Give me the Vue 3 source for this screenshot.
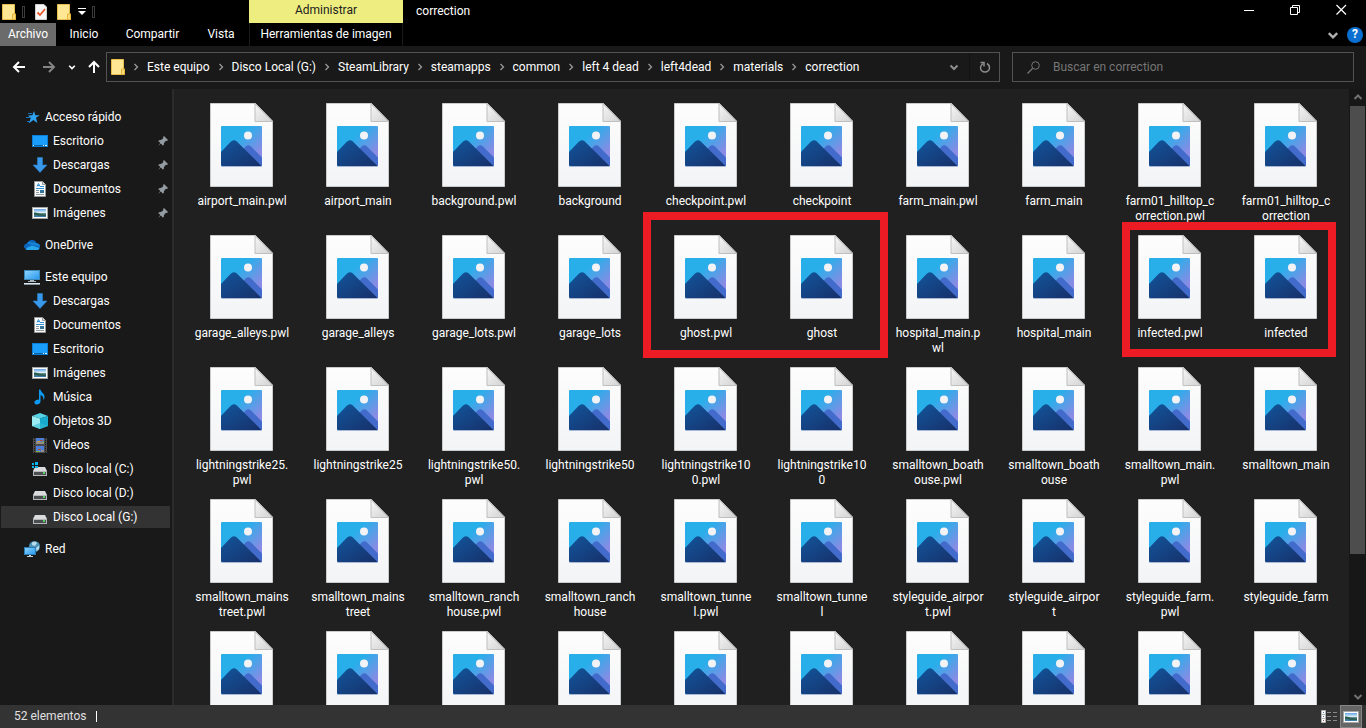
<template>
  <div class="explorer">
    <svg class="defs" aria-hidden="true">
      <defs>
        <linearGradient id="sky" x1="0" y1="0" x2="1" y2="1">
          <stop offset="0.35" stop-color="#28afea" />
          <stop offset="0.8" stop-color="#8a8be4" />
        </linearGradient>
        <linearGradient id="hill" x1="0" y1="0" x2="1" y2="1">
          <stop offset="0" stop-color="#12559b" />
          <stop offset="1" stop-color="#17306a" />
        </linearGradient>
        <linearGradient id="paper" x1="0" y1="0" x2="0" y2="1">
          <stop offset="0" stop-color="#fdfdfd" />
          <stop offset="1" stop-color="#f3f4f6" />
        </linearGradient>
        <linearGradient id="fold" x1="0" y1="0" x2="1" y2="1">
          <stop offset="0" stop-color="#f6f6f6" />
          <stop offset="1" stop-color="#d2d2d2" />
        </linearGradient>
        <linearGradient id="screen" x1="0" y1="0" x2="1" y2="1">
          <stop offset="0" stop-color="#8fd6ff" />
          <stop offset="1" stop-color="#2496ee" />
        </linearGradient>
        <linearGradient id="photo" x1="0" y1="0" x2="0" y2="1">
          <stop offset="0" stop-color="#5fa5ea" />
          <stop offset="0.45" stop-color="#dcecf5" />
          <stop offset="0.6" stop-color="#3d6f68" />
          <stop offset="1" stop-color="#3f80b5" />
        </linearGradient>
      </defs>

      <symbol id="i-image-file" viewBox="0 0 64 84">
        <path d="M.5 .5H45.5L62.5 18V83.5H.5z" fill="url(#paper)" stroke="#c9cbcc" />
        <path d="M45 .8V18.500H62.500z" fill="url(#fold)" stroke="#bfbfbf" />
        <rect x="11" y="24" width="41" height="40" rx="1" fill="#a9b7d6" />
        <rect x="11" y="23" width="41" height="40" rx="1" fill="url(#sky)" />
        <path d="M33 46.500L36 43.200Q38.500 41.200 41 43.500L52 54.500V62L51 63H40z" fill="#426bcb" />
        <path d="M11 49L20.500 39Q23.500 36 26.800 38.500L51.500 63H12L11 62z" fill="url(#hill)" />
        <circle cx="38" cy="32.500" r="4" fill="#f3f3f5" />
      </symbol>

      <symbol id="i-folder" viewBox="0 0 14 16">
        <path d="M.5 .5H12.500V10H13.500V15.500H.5z" fill="#ffe794" stroke="#e9bf4b" />
        <path d="M10.500 15.500V10H13.500V15.500z" fill="#ffdd75" stroke="#e3b33c" />
      </symbol>

      <symbol id="i-star" viewBox="0 0 16 16">
        <path d="M10 2L11.300 6.200H15.800L12 8.800L13.300 14L9.300 11L4.800 14.500L6.700 9L4 6.500L8.300 6.200z" fill="#2ea3f2" />
        <path d="M4 4.500H8M2 8.500H7M3 12.500H6" stroke="#1d75b8" />
      </symbol>

      <symbol id="i-desktop" viewBox="0 0 16 16">
        <rect x=".5" y="2.500" width="15" height="11" fill="#1b9dfb" stroke="#0b7fd6" />
        <path d="M1 12.500H15" stroke="#0761aa" />
        <path d="M1 12.500H2M11 12.500H12M13 12.500H15" stroke="#e8f6ff" />
      </symbol>

      <symbol id="i-download" viewBox="0 0 16 16">
        <path d="M5.500 .5H10.500V8H15L8 15.500L1 8H5.500z" fill="#3898ea" stroke="#2c7fcc" stroke-width=".6" />
      </symbol>

      <symbol id="i-document" viewBox="0 0 16 16">
        <path d="M2.500 .5H10.500L13.500 3.500V15.500H2.500z" fill="#fafafa" stroke="#999" />
        <path d="M10.500 .5V3.500H13.500" fill="#ddd" stroke="#999" />
        <path d="M5 5.500L6.500 2.500L8 5.500M5.500 4.500H8M4 7.500H12M8 5.500H12" fill="none" stroke="#2991dc" />
        <path d="M4 9.500H7M4 11.500H7M4 13.500H12" stroke="#8d9aa4" />
        <rect x="8" y="9" width="4" height="3" fill="#31759d" />
      </symbol>

      <symbol id="i-picture" viewBox="0 0 16 16">
        <rect x=".5" y="2.500" width="15" height="11" fill="#fff" stroke="#a5a5a5" />
        <rect x="2" y="4" width="12" height="8" fill="url(#photo)" />
        <path d="M2 7.500Q5 7 8 9L14 10V11Q7 11 2 9.500z" fill="#2d5d4e" />
      </symbol>

      <symbol id="i-cloud" viewBox="0 0 16 16">
        <path d="M3 12Q0 12 0 9.300Q.2 6.800 3 6.500Q4.500 3 8 3Q11.500 3 12.500 6.300Q16 6.500 16 9.500Q15.800 13 13 13H3z" fill="#0c66bd" />
        <path d="M5 5L12.500 6.300Q16 6.500 16 9.500L9 8L3 6.500Q4 5 5 5z" fill="#1783d4" />
        <path d="M1.500 12Q4 9.500 8 8.500L15.500 11Q14.800 13 13 13H3Q2 12.800 1.500 12z" fill="#28a8ea" />
      </symbol>

      <symbol id="i-computer" viewBox="0 0 16 16">
        <rect x=".5" y="1.500" width="15" height="9" fill="url(#screen)" stroke="#3b87b5" />
        <path d="M6 11.500H10M4 12.500H12" stroke="#a9b8c4" />
        <path d="M0 14.500H16" stroke="#dfe7ee" />
        <path d="M0 15.500H16" stroke="#8694a1" />
      </symbol>

      <symbol id="i-music" viewBox="0 0 16 16">
        <path d="M7 .5H8.500C9 4 13 4 12.500 8.500Q12.200 10 11 11Q12 7 8.500 6V12.500Q8 15.500 4.500 15.500Q2 15 2.500 12.500Q3.500 10.500 7 10.500z" fill="#0d9af3" />
      </symbol>

      <symbol id="i-cube" viewBox="0 0 16 16">
        <path d="M0 3L8 0L16 3L8 5.500z" fill="#54d4e6" />
        <path d="M0 3L8 5.500V16L0 13z" fill="#9cecf3" />
        <path d="M16 3L8 5.500V16L16 13z" fill="#18a9cf" />
        <path d="M0 13L8 10L16 13L8 16z" fill="#35bed6" opacity=".6" />
      </symbol>

      <symbol id="i-video" viewBox="0 0 16 16">
        <rect x="1" y="1" width="14" height="15" fill="#4b4b4b" />
        <path d="M2.500 1V16M13.500 1V16" stroke="#171717" stroke-dasharray="1 1" />
        <rect x="4" y="1" width="8" height="6" fill="#4a7ed8" />
        <rect x="4" y="9" width="8" height="6" fill="#4a7ed8" />
        <path d="M4 6H12M5 4.500H8M9 14H12" stroke="#d79b35" />
        <path d="M8 3.500H11M6 12.500H9" stroke="#bd4a34" />
        <path d="M4 14.500H8M10 5H12" stroke="#7eb24b" />
      </symbol>

      <symbol id="i-drive" viewBox="0 0 16 16">
        <path d="M3 6H13L15 10H1z" fill="#d9dbdd" />
        <rect x="1.500" y="10.500" width="13" height="4" fill="#4c4d4f" stroke="#b6b8ba" />
        <rect x="11" y="11" width="2" height="2" fill="#56d364" />
      </symbol>

      <symbol id="i-system-drive" viewBox="0 0 16 16">
        <path d="M3 6H13L15 10H1z" fill="#d9dbdd" />
        <rect x="1.500" y="10.500" width="13" height="4" fill="#4c4d4f" stroke="#b6b8ba" />
        <rect x="11" y="11" width="2" height="2" fill="#56d364" />
        <path d="M0 1H6V7H0z" fill="#191919" />
        <path d="M0 2H2V4H0zM3 1H6V4H3zM0 5H2V7H0zM3 5H6V7H3z" fill="#0cb4f0" />
      </symbol>

      <symbol id="i-network" viewBox="0 0 16 16">
        <circle cx="10.500" cy="5.500" r="5.500" fill="#4f93b5" />
        <path d="M8 1.500Q11 0 13 2L11 5L8 4zM12 7L15 4.500V8L12.500 10z" fill="#b9dcea" />
        <rect x=".5" y="6.500" width="11" height="7" fill="url(#screen)" stroke="#2c7cb3" />
        <path d="M5 14.500H7M3 15.500H9" stroke="#c2ced6" />
      </symbol>

      <symbol id="i-pin" viewBox="0 0 12 12">
        <path d="M7 1L11 5L10 6L9 5.700L7 8L6.800 10L5.800 10.500L3.800 8.500L1 11L3.300 8L1.300 6L2 5.200L4 5L6.500 3L6 2z" fill="#939ba1" />
      </symbol>

      <symbol id="i-chevron" viewBox="0 0 10 10">
        <path d="M1.500 3.500L5 7L8.500 3.500" fill="none" stroke="currentColor" stroke-width="2" />
      </symbol>

      <symbol id="i-crumb" viewBox="0 0 6 8">
        <path d="M1.500 1L4.500 4L1.500 7" fill="none" stroke="currentColor" stroke-width="1.300" />
      </symbol>
    </svg>

    <header class="header">
      <div class="quick">
        <svg class="folder"><use href="#i-folder" /></svg>
        <span class="grip"></span>
        <button class="plain check" aria-label="Propiedades">
          <svg width="12" height="16" viewBox="0 0 12 16">
            <path d="M.5 .5H9L11.500 3V15.500H.5z" fill="#f7f7f7" stroke="#d0d0d0" />
            <path d="M2.500 8.500L5 11L10 5" fill="none" stroke="#e8562a" stroke-width="1.800" />
          </svg>
        </button>
        <button class="plain" aria-label="Nueva carpeta">
          <svg class="folder"><use href="#i-folder" /></svg>
        </button>
        <button class="plain more" aria-label="Personalizar">
          <svg width="8" height="7" viewBox="0 0 8 7">
            <path d="M0 .5H8" stroke="#fff" />
            <path d="M0 3H8L4 7z" fill="#fff" />
          </svg>
        </button>
        <span class="grip"></span>
      </div>
      <div class="context-title">Administrar</div>
      <div class="title-bar">
        <span class="title">correction</span>
        <div class="window-buttons">
          <button class="plain" aria-label="Minimizar">
            <svg width="11" height="11" viewBox="0 0 11 11"><path d="M0 6.500H10" stroke="#fff" /></svg>
          </button>
          <button class="plain" aria-label="Restaurar">
            <svg width="11" height="11" viewBox="0 0 11 11">
              <path d="M.5 3.500H7.500V10.500H.5zM2.500 3.500V1.500H9.500V8.500H7.500" fill="none" stroke="#fff" />
            </svg>
          </button>
          <button class="plain" aria-label="Cerrar">
            <svg width="11" height="11" viewBox="0 0 11 11"><path d="M.5 1L10 10.500M10 1L.5 10.500" stroke="#fff" stroke-width="1.200" /></svg>
          </button>
        </div>
      </div>

      <nav class="tabs">
        <button class="plain tab file">Archivo</button>
        <button class="plain tab">Inicio</button>
        <button class="plain tab wide">Compartir</button>
        <button class="plain tab">Vista</button>
      </nav>
      <button class="plain context-tab">Herramientas de imagen</button>
      <div class="ribbon-end">
        <button class="plain" aria-label="Expandir la cinta">
          <svg width="12" height="12"><use href="#i-chevron" /></svg>
        </button>
        <button class="plain help" aria-label="Ayuda">?</button>
      </div>
    </header>

    <div class="address-row">
      <div class="history">
        <button class="plain" aria-label="Atrás">
          <svg width="14" height="12" viewBox="0 0 14 12">
            <path d="M13 6H2M7 1L2 6L7 11" fill="none" stroke="#fff" stroke-width="2" />
          </svg>
        </button>
        <button class="plain" aria-label="Adelante">
          <svg width="14" height="12" viewBox="0 0 14 12">
            <path d="M1 6H12M7 1L12 6L7 11" fill="none" stroke="#858585" stroke-width="2" />
          </svg>
        </button>
        <button class="plain recent" aria-label="Ubicaciones recientes">
          <svg width="8" height="8"><use href="#i-chevron" /></svg>
        </button>
        <button class="plain" aria-label="Arriba">
          <svg width="12" height="14" viewBox="0 0 12 14">
            <path d="M6 13V2M1 7L6 2L11 7" fill="none" stroke="#fff" stroke-width="2" />
          </svg>
        </button>
      </div>
      <div class="address">
        <svg class="folder"><use href="#i-folder" /></svg>
        <template v-for="crumb in crumbs" :key="crumb">
          <svg class="crumb-arrow"><use href="#i-crumb" /></svg>
          <button class="plain">{{ crumb }}</button>
        </template>
        <div class="address-end">
          <button class="plain drop" aria-label="Ubicaciones anteriores">
            <svg width="10" height="10"><use href="#i-chevron" /></svg>
          </button>
          <button class="plain refresh" aria-label="Actualizar">
            <svg width="12" height="12" viewBox="0 0 12 12">
              <path d="M8 2.500Q10.500 4 10.500 6.500A4.500 4.500 0 0 1 1.500 6.500Q1.500 4.500 4 2.500" fill="none" stroke="#8e8e8e" stroke-width="1.500" />
              <path d="M1.500 1.500H5V5.500" fill="none" stroke="#8e8e8e" stroke-width="1.500" />
            </svg>
          </button>
        </div>
      </div>
      <label class="search">
        <svg width="13" height="13" viewBox="0 0 13 13">
          <path d="M.5 12.500L5.500 7.500" stroke="#777" stroke-width="1.200" />
          <circle cx="8.500" cy="4.500" r="3.800" fill="none" stroke="#777" />
        </svg>
        <input type="text" v-model="query" placeholder="Buscar en correction" aria-label="Buscar en correction" />
      </label>
    </div>

    <div class="body">
      <nav class="sidebar">
        <ul v-for="group in groups" :key="group[0].label">
          <li v-for="item in group" :key="item.label">
            <a href="#" class="place" :class="{ child: item.child, selected: item.selected }">
              <svg class="icon"><use :href="'#i-' + item.icon" /></svg>
              <span>{{ item.label }}</span>
              <svg v-if="item.pinned" class="pin"><use href="#i-pin" /></svg>
            </a>
          </li>
        </ul>
      </nav>

      <main class="files">
        <button v-for="(name, i) in files" :key="i" class="plain item">
          <svg class="thumb"><use href="#i-image-file" /></svg>
          <span class="name">{{ name }}</span>
        </button>
        <div class="mark ghost"></div>
        <div class="mark infected"></div>
      </main>

      <div class="scrollbar">
        <svg class="up"><use href="#i-chevron" /></svg>
        <div class="track"><div class="handle"></div></div>
        <svg><use href="#i-chevron" /></svg>
      </div>
    </div>

    <footer class="status">
      <span>52 elementos</span>
      <span class="divider"></span>
      <div class="views">
        <button class="plain" aria-label="Detalles">
          <svg width="16" height="13" viewBox="0 0 16 13">
            <path d="M.5 .5H4.500V12.500H.5zM.5 4.500H4.500M.5 8.500H4.500" fill="#fff" stroke="#b5b5b5" />
            <path d="M2 2.500H3M2 6.500H3" stroke="#4e7bb0" />
            <path d="M2 10.500H3" stroke="#b04e4e" />
            <path d="M6 2.500H10M12 2.500H16M6 6.500H10M12 6.500H16M6 10.500H10M12 10.500H16" stroke="#8a8a8a" />
          </svg>
        </button>
        <button class="plain active" aria-label="Iconos grandes">
          <svg class="icon"><use href="#i-picture" /></svg>
        </button>
      </div>
    </footer>
  </div>
</template>

<script setup>
import { ref } from 'vue'

const query = ref('')

const crumbs = [
  'Este equipo',
  'Disco Local (G:)',
  'SteamLibrary',
  'steamapps',
  'common',
  'left 4 dead',
  'left4dead',
  'materials',
  'correction'
]

const groups = [
  [
    { label: 'Acceso rápido', icon: 'star' },
    { label: 'Escritorio', icon: 'desktop', child: true, pinned: true },
    { label: 'Descargas', icon: 'download', child: true, pinned: true },
    { label: 'Documentos', icon: 'document', child: true, pinned: true },
    { label: 'Imágenes', icon: 'picture', child: true, pinned: true }
  ],
  [{ label: 'OneDrive', icon: 'cloud' }],
  [
    { label: 'Este equipo', icon: 'computer' },
    { label: 'Descargas', icon: 'download', child: true },
    { label: 'Documentos', icon: 'document', child: true },
    { label: 'Escritorio', icon: 'desktop', child: true },
    { label: 'Imágenes', icon: 'picture', child: true },
    { label: 'Música', icon: 'music', child: true },
    { label: 'Objetos 3D', icon: 'cube', child: true },
    { label: 'Videos', icon: 'video', child: true },
    { label: 'Disco local (C:)', icon: 'system-drive', child: true },
    { label: 'Disco local (D:)', icon: 'drive', child: true },
    { label: 'Disco Local (G:)', icon: 'drive', child: true, selected: true }
  ],
  [{ label: 'Red', icon: 'network' }]
]

// long names carry their own line breaks
const files = [
  'airport_main.pwl', 'airport_main', 'background.pwl', 'background', 'checkpoint.pwl',
  'checkpoint', 'farm_main.pwl', 'farm_main', 'farm01_hilltop_c\norrection.pwl', 'farm01_hilltop_c\norrection',
  'garage_alleys.pwl', 'garage_alleys', 'garage_lots.pwl', 'garage_lots', 'ghost.pwl',
  'ghost', 'hospital_main.p\nwl', 'hospital_main', 'infected.pwl', 'infected',
  'lightningstrike25.\npwl', 'lightningstrike25', 'lightningstrike50.\npwl', 'lightningstrike50', 'lightningstrike10\n0.pwl',
  'lightningstrike10\n0', 'smalltown_boath\nouse.pwl', 'smalltown_boath\nouse', 'smalltown_main.\npwl', 'smalltown_main',
  'smalltown_mains\ntreet.pwl', 'smalltown_mains\ntreet', 'smalltown_ranch\nhouse.pwl', 'smalltown_ranch\nhouse', 'smalltown_tunne\nl.pwl',
  'smalltown_tunne\nl', 'styleguide_airpor\nt.pwl', 'styleguide_airpor\nt', 'styleguide_farm.\npwl', 'styleguide_farm',
  // the last row is cut off above its names
  '', '', '', '', '', '', '', '', '', ''
]
</script>

<style>
body {
  background: #191919;
}
</style>

<style scoped>
.explorer {
  display: flex;
  flex-direction: column;
  height: 100vh;
  overflow: hidden;
  background: #191919;
  color: #fff;
  font-family: Roboto, "Open Sans", sans-serif;
  font-size: 12px;
  line-height: 15px;
}

.explorer * {
  box-sizing: border-box;
}

svg {
  display: block;
  flex: none;
}

.defs {
  position: absolute;
  width: 0;
  height: 0;
}

.plain {
  display: flex;
  align-items: center;
  justify-content: center;
  padding: 0;
  border: 0;
  background: none;
  color: inherit;
  font: inherit;
  white-space: nowrap;
}

.folder {
  width: 14px;
  height: 16px;
}

.icon {
  width: 16px;
  height: 16px;
}

/* title bar and ribbon tabs */
.header {
  display: grid;
  grid-template-columns: 249px 154px 1fr;
  grid-template-rows: 23px 23px;
  background: #000;
}

.quick {
  display: flex;
  align-items: center;
  padding-left: 2px;
}

.grip {
  width: 3px;
  height: 12px;
  margin-left: 6px;
  border: 1px solid #3c3c3c;
}

.check {
  margin: 0 10px;
}

.more {
  margin-left: 7px;
}

.context-title {
  display: flex;
  align-items: center;
  justify-content: center;
  padding-bottom: 2px;
  background: #eeee80;
  color: #1d1d1d;
}

.title-bar {
  display: flex;
  align-items: center;
  justify-content: space-between;
  padding-left: 13px;
}

.window-buttons {
  display: flex;
  padding: 0 2px 4px 0;
}

.window-buttons .plain {
  width: 46px;
}

.tabs {
  display: flex;
}

.tab {
  width: 56px;
}

.tab.wide {
  width: 81px;
}

.file {
  background: #6b6b6b;
}

.context-tab {
  border-left: 1px solid #1a1a1a;
  border-right: 1px solid #1a1a1a;
}

.ribbon-end {
  display: flex;
  align-items: center;
  justify-content: flex-end;
  gap: 8px;
  padding-right: 3px;
  color: #b0b0b0;
}

.help {
  width: 16px;
  height: 16px;
  border-radius: 50%;
  background: #0a6fd0;
  color: #fff;
  font-weight: bold;
}

/* address bar */
.address-row {
  display: flex;
  align-items: center;
  height: 43px;
  padding: 0 12px 1px;
}

.history {
  display: flex;
  align-items: center;
  gap: 12px;
  width: 94px;
}

.history .plain:nth-child(2) {
  margin-left: 4px;
}

.address,
.search {
  display: flex;
  align-items: center;
  height: 30px;
  border: 1px solid #535353;
}

.address {
  flex: 1;
  min-width: 0;
  padding-left: 4px;
}

.crumb-arrow {
  width: 6px;
  height: 8px;
  margin: 0 8px;
  color: #9a9a9a;
}

.address-end {
  display: flex;
  align-self: stretch;
  margin-left: auto;
  color: #8e8e8e;
}

.address-end .plain {
  width: 30px;
}

.refresh {
  border-left: 1px solid #141414;
}

.search {
  flex: none;
  gap: 13px;
  width: 342px;
  margin-left: 12px;
  padding-left: 14px;
}

.search input {
  flex: 1;
  min-width: 0;
  padding: 0;
  border: 0;
  outline: 0;
  background: none;
  color: #fff;
  font: inherit;
}

.search input::placeholder {
  color: #767676;
  opacity: 1;
}

/* navigation pane */
.body {
  display: flex;
  flex: 1;
  min-height: 0;
}

.sidebar {
  flex: none;
  width: 174px;
  padding-top: 16px;
  border-right: 2px solid #2b2b2b;
}

.sidebar ul {
  margin: 0 0 8px;
  padding: 0;
  list-style: none;
}

.place {
  display: flex;
  align-items: center;
  gap: 5px;
  height: 22px;
  margin: 0 2px 2px 1px;
  padding-left: 23px;
  color: #fff;
  text-decoration: none;
}

.sidebar li {
  padding-top: 1px;
  height: 24px;
}

.child {
  padding-left: 31px;
}

.selected {
  background: #333;
}

.pin {
  width: 12px;
  height: 12px;
  margin-left: auto;
  margin-right: 1px;
}

/* file grid */
.files {
  position: relative;
  flex: 1;
  display: grid;
  grid-template-columns: repeat(auto-fill, 116px);
  grid-auto-rows: 132px;
  align-content: start;
  padding: 14px 0 0 10px;
  overflow: hidden;
  background: #202020;
}

.item {
  flex-direction: column;
  justify-content: flex-start;
}

.thumb {
  width: 64px;
  height: 84px;
}

.name {
  margin-top: 7px;
  text-align: center;
  white-space: pre;
}

.mark {
  position: absolute;
  border: 8px solid #ed1c24;
}

.ghost {
  left: 469px;
  top: 123px;
  width: 245px;
  height: 146px;
}

.infected {
  left: 948px;
  top: 133px;
  width: 214px;
  height: 135px;
}

.scrollbar {
  display: flex;
  flex-direction: column;
  align-items: center;
  width: 17px;
  background: #171717;
  color: #717171;
}

.scrollbar svg {
  width: 10px;
  height: 17px;
}

.scrollbar .up {
  transform: rotate(180deg);
}

.track {
  flex: 1;
  align-self: stretch;
  padding: 0 1px;
}

.handle {
  height: 77%;
  background: #4d4d4d;
}

/* status bar */
.status {
  display: flex;
  align-items: center;
  height: 23px;
  padding-left: 14px;
  background: #333;
  color: #e0e0e0;
}

.divider {
  width: 1px;
  height: 11px;
  margin-left: 10px;
  background: #fff;
}

.views {
  display: flex;
  align-self: stretch;
  margin-left: auto;
  padding-right: 4px;
}

.views .plain {
  width: 22px;
}

.views .active {
  border: 1px solid #858585;
  background: #666;
}
</style>
